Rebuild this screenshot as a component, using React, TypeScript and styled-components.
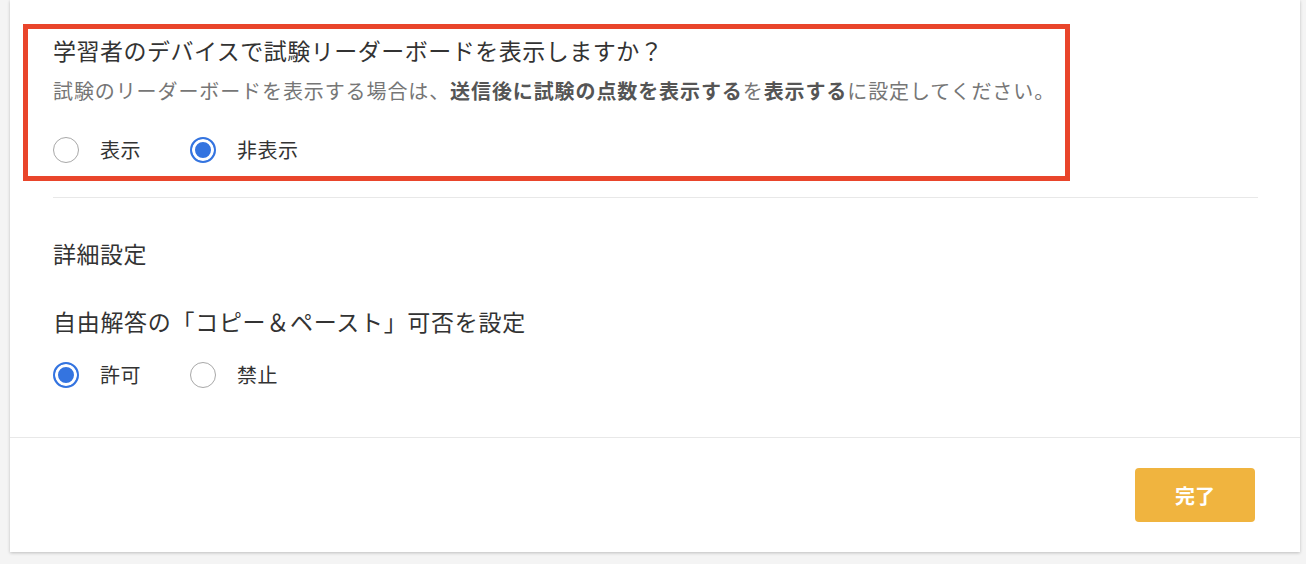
import React from "react";
import styled, { createGlobalStyle } from "styled-components";

const GlobalStyle = createGlobalStyle`
  html, body {
    margin: 0;
    padding: 0;
    background: #f4f4f4;
  }
  body {
    font-family: "Noto Sans CJK JP", "Noto Sans", sans-serif;
    color: #333;
  }
`;

interface RadioProps {
  label: string;
  checked?: boolean;
}

const RadioOption = ({ label, checked }: RadioProps) => (
  <Option>
    <Circle checked={checked} />
    <OptionLabel>{label}</OptionLabel>
  </Option>
);

export default function App() {
  return (
    <Page>
      <GlobalStyle />
      <Card>
        <Body>
          <Section>
            <Question>学習者のデバイスで試験リーダーボードを表示しますか？</Question>
            <Hint>
              試験のリーダーボードを表示する場合は、<b>送信後に試験の点数を表示する</b>を
              <b>表示する</b>に設定してください。
            </Hint>
            <RadioRow>
              <RadioOption label="表示" />
              <RadioOption label="非表示" checked />
            </RadioRow>
            <Highlight />
          </Section>

          <Divider />

          <Heading>詳細設定</Heading>
          <SubHeading>自由解答の「コピー＆ペースト」可否を設定</SubHeading>
          <RadioRow $top={25}>
            <RadioOption label="許可" checked />
            <RadioOption label="禁止" />
          </RadioRow>
        </Body>

        <Footer>
          <DoneButton>完了</DoneButton>
        </Footer>
      </Card>
    </Page>
  );
}

const Page = styled.div`
  box-sizing: border-box;
  height: 564px;
  padding: 0 6px 0 10px;
`;

const Card = styled.div`
  background: #fff;
  box-shadow: 0 1px 3px rgba(0, 0, 0, 0.22);
`;

const Body = styled.div`
  padding: 0 42px 48px 43px;
`;

const Section = styled.section`
  position: relative;
  padding-top: 35px;
`;

const Highlight = styled.div`
  position: absolute;
  left: -30px;
  top: 24px;
  width: 1047px;
  height: 157px;
  box-sizing: border-box;
  border: 5px solid #e9452b;
  pointer-events: none;
`;

const Question = styled.h2`
  margin: 0;
  font-size: 23px;
  letter-spacing: 0.5px;
  line-height: 30px;
  font-weight: 400;
  color: #333;
`;

const Hint = styled.p`
  margin: 13px 0 0;
  font-size: 20px;
  letter-spacing: 0.9px;
  line-height: 26px;
  color: #767676;

  b {
    font-weight: 700;
    color: #555;
  }
`;

const RadioRow = styled.div<{ $top?: number }>`
  display: flex;
  align-items: center;
  gap: 49px;
  margin-top: ${(p) => p.$top ?? 32}px;
  height: 28px;
`;

const Option = styled.label`
  display: flex;
  align-items: center;
  gap: 21px;
`;

const Circle = styled.span<{ checked?: boolean }>`
  box-sizing: border-box;
  width: 26px;
  height: 26px;
  border-radius: 50%;
  background: ${(p) => (p.checked ? "#3474e0" : "#fff")};
  border: ${(p) => (p.checked ? "2px solid #3474e0" : "1px solid #a8a8a8")};
  box-shadow: ${(p) => (p.checked ? "inset 0 0 0 3px #fff" : "none")};
`;

const OptionLabel = styled.span`
  font-size: 20px;
  letter-spacing: 0.5px;
  line-height: 28px;
  color: #333;
`;

const Divider = styled.hr`
  margin: 33px 0 0;
  border: none;
  border-top: 1px solid #e8e8e8;
`;

const Heading = styled.h3`
  margin: 40px 0 0;
  font-size: 23px;
  letter-spacing: 0.5px;
  line-height: 30px;
  font-weight: 400;
  color: #333;
`;

const SubHeading = styled.h4`
  margin: 38px 0 0;
  font-size: 23px;
  letter-spacing: 0.7px;
  line-height: 30px;
  font-weight: 400;
  color: #333;
`;

const Footer = styled.footer`
  display: flex;
  justify-content: flex-end;
  border-top: 1px solid #e8e8e8;
  padding: 30px 45px 30px 0;
`;

const DoneButton = styled.button`
  width: 120px;
  height: 54px;
  border: none;
  border-radius: 4px;
  background: #f0b43f;
  color: #fff;
  font-family: "Noto Sans CJK JP", sans-serif;
  font-size: 20px;
  font-weight: 700;
`;
